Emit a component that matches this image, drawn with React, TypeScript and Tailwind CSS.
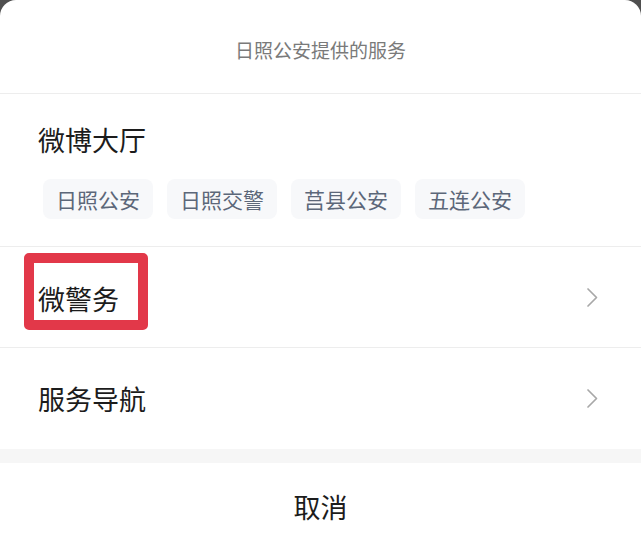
import React from 'react';

const chips = ['日照公安', '日照交警', '莒县公安', '五连公安'];

const Chevron = () => (
  <svg width="13" height="21" viewBox="0 0 13 21" fill="none">
    <path d="M2 2L10.5 10.5L2 19" stroke="#a8a8a8" strokeWidth="1.7" strokeLinecap="round" strokeLinejoin="round" />
  </svg>
);

export default function App() {
  return (
    <div
      className="w-[641px] h-[550px] bg-[#4f4f4f] overflow-hidden"
      style={{ fontFamily: '"Noto Sans CJK SC", "Noto Sans", sans-serif' }}
    >
      <div className="bg-white rounded-t-[16px] h-full flex flex-col">
        {/* header */}
        <div className="h-[94px] shrink-0 flex items-center justify-center pt-[6px] border-b border-[#ededed]">
          <span className="text-[19px] leading-[19px] text-[#7a7a7a]">日照公安提供的服务</span>
        </div>

        {/* 微博大厅 */}
        <div className="h-[153px] shrink-0 border-b border-[#ededed] pl-[38px] pt-[32px]">
          <div className="text-[27px] leading-[27px] text-[#1c1c1c]">微博大厅</div>
          <div className="flex gap-[14px] mt-[26px] ml-[5px]">
            {chips.map((c) => (
              <div
                key={c}
                className="h-[40px] px-[13px] flex items-center rounded-[8px] bg-[#f7f8fa] text-[21px] leading-[21px] text-[#5c6779]"
              >
                {c}
              </div>
            ))}
          </div>
        </div>

        {/* 微警务 */}
        <div className="relative h-[101px] shrink-0 flex items-center justify-between pl-[38px] pr-[42px] border-b border-[#ededed]">
          <span className="text-[27px] leading-[27px] text-[#1c1c1c] mt-[2px]">微警务</span>
          <Chevron />
          <div className="absolute left-[24px] top-[6px] w-[124px] h-[77px] border-[10px] border-[#e23849] rounded-[5px]" />
        </div>

        {/* 服务导航 */}
        <div className="h-[101px] shrink-0 flex items-center justify-between pl-[38px] pr-[42px]">
          <span className="text-[27px] leading-[27px] text-[#1c1c1c]">服务导航</span>
          <Chevron />
        </div>

        <div className="h-[14px] shrink-0 bg-[#f6f6f6]" />

        {/* cancel */}
        <div className="flex-1 flex items-center justify-center">
          <span className="text-[27px] leading-[27px] text-[#1c1c1c]">取消</span>
        </div>
      </div>
    </div>
  );
}
